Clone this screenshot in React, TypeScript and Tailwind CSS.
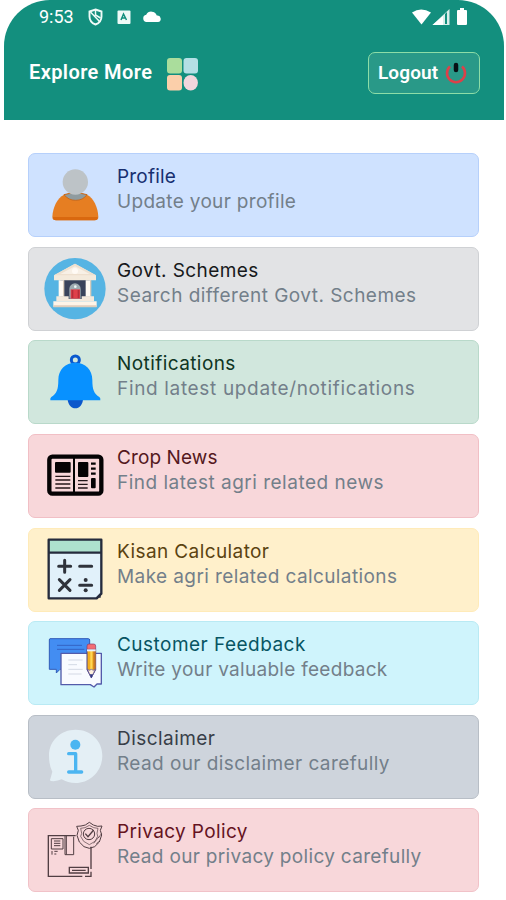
import type { ReactNode } from "react";

type Item = {
  title: string;
  text: string;
  box: string;
  titleClass: string;
  textClass: string;
  viewBox: string;
  icon: ReactNode;
};

const items: Item[] = [
  {
    title: "Profile",
    text: "Update your profile",
    box: "bg-[#cfe2ff] border-[#b6d0fb]",
    titleClass: "text-[#172f70] tracking-[0.2px]",
    textClass: "tracking-[0.32px]",
    viewBox: "28 28 264 246",
    icon: (
      <>
        <path d="M98 217C99 188 113 160 133 150Q167 137 202 150C222 160 235 188 236 217Q236 227 225 227H109Q98 227 98 217Z" fill="#e67e22" />
        <path d="M100 217h134q1 10-9 10H109q-10 0-9-10Z" fill="#d9680f" />
        <path d="M133 150q34-10 69 0-12 17-34 17t-35-17Z" fill="#8f9b9f" stroke="#c96a1c" strokeWidth="3" />
        <circle cx="167" cy="112" r="38" fill="#bdc3c7" />
      </>
    ),
  },
  {
    title: "Govt. Schemes",
    text: "Search different Govt. Schemes",
    box: "bg-[#e2e3e5] border-[#cfd1d4]",
    titleClass: "text-[#17191b] tracking-[0.42px]",
    textClass: "tracking-[0.47px]",
    viewBox: "28 24 264 246",
    icon: (
      <>
        <circle cx="166" cy="146" r="92" fill="#56b4e3" />
        <rect x="122" y="112" width="88" height="66" fill="#39435b" />
        <path d="M103 106 166 71l63 35v15H103Z" fill="#f4eadc" />
        <path d="M103 106 166 71l63 35Z" fill="#eee0cf" />
        <path d="M122 102 166 79l44 23Z" fill="#f8f0e6" />
        <circle cx="166" cy="93" r="9" fill="#fffaf5" />
        <path d="M117 121h16v49h-16ZM198 121h16v49h-16Z" fill="#fffaf3" />
        <path d="M130 121h4v49h-4ZM211 121h4v49h-4Z" fill="#d9cbbb" />
        <path d="M149 176v-29a17 17 0 0 1 34 0v29Z" fill="#9eabb0" />
        <path d="M153 148h28v28h-28Z" fill="#df404a" />
        <path d="M156 150h5v24h-5ZM174 150h5v24h-5Z" fill="#b62e3a" />
        <circle cx="167" cy="140" r="4" fill="#eef5f5" />
        <path d="M110 169h37v8h39v-8h37v15H110Z" fill="#f4e9dc" />
        <path d="M101 184h130v16H101Z" fill="#fff4e8" />
        <path d="M101 196h130v6H101Z" fill="#e0cdbb" />
      </>
    ),
  },
  {
    title: "Notifications",
    text: "Find latest update/notifications",
    box: "bg-[#d1e7dd] border-[#b9d9ca]",
    titleClass: "text-[#0e3523] tracking-[0.42px]",
    textClass: "tracking-[0.66px]",
    viewBox: "28 20 264 246",
    icon: (
      <>
        <circle cx="167" cy="77" r="12" fill="none" stroke="#0959cf" strokeWidth="9" />
        <path d="M144 196h46c-2 16-11 26-23 26s-21-10-23-26Z" fill="#0b57cb" />
        <path d="M116 137c0-31 21-52 51-52s51 21 51 52c0 29 5 41 21 51q4 3 3 10H92q-1-7 3-10c16-10 21-22 21-51Z" fill="#0891ff" />
      </>
    ),
  },
  {
    title: "Crop News",
    text: "Find latest agri related news",
    box: "bg-[#f8d7da] border-[#f1bfc5]",
    titleClass: "text-[#541820] tracking-[0.1px]",
    textClass: "tracking-[0.5px]",
    viewBox: "28 22 264 246",
    icon: (
      <>
        <rect x="89" y="87" width="156" height="111" rx="9" fill="#f8d7da" stroke="#050304" strokeWidth="13" />
        <path d="M163 88v110" stroke="#050304" strokeWidth="6" />
        <rect x="106" y="103" width="47" height="32" rx="3" fill="#050304" />
        <rect x="175" y="103" width="31" height="45" rx="3" fill="#050304" />
        <path d="M107 146h45M107 157h45M107 169h45M107 181h45M175 159h29M175 170h29M175 181h29" stroke="#241619" strokeWidth="4" />
        <path d="M214 108h14M214 123h14M214 138h14" stroke="#050304" strokeWidth="7" />
        <rect x="214" y="151" width="14" height="31" rx="3" fill="#050304" />
      </>
    ),
  },
  {
    title: "Kisan Calculator",
    text: "Make agri related calculations",
    box: "bg-[#fff0cb] border-[#ffebb9]",
    titleClass: "text-[#5b4311] tracking-[0.4px]",
    textClass: "tracking-[0.4px]",
    viewBox: "28 21 264 246",
    icon: (
      <>
        <path d="M87 53h158v162l-14 14H87Z" fill="#e1f1fa" />
        <path d="M87 53h158v38H87Z" fill="#aee2ce" />
        <path d="M87 53h158v162l-14 14H87ZM87 92h158" fill="none" stroke="#252b3d" strokeWidth="7" strokeLinejoin="round" />
        <path d="M228 227 243 212v15Z" fill="#252b3d" />
        <path d="M117 133h36M135 115v36M180 133h36M119 173l32 32M151 173l-32 32M180 190h36" stroke="#2f333b" strokeWidth="9" strokeLinecap="round" />
        <circle cx="198" cy="174" r="6" fill="#2f333b" />
        <circle cx="198" cy="205" r="6" fill="#2f333b" />
      </>
    ),
  },
  {
    title: "Customer Feedback",
    text: "Write your valuable feedback",
    box: "bg-[#cff4fc] border-[#b9eaf4]",
    titleClass: "text-[#075563] tracking-[0.47px]",
    textClass: "tracking-[0.29px]",
    viewBox: "28 22 264 246",
    icon: (
      <>
        <path d="M91 72h115q4 0 4 4v88h-89l-11 11v-11H89V76q0-4 2-4Z" fill="#438df2" stroke="#315bb6" strokeWidth="3" />
        <path d="M112 92h75M112 104h82" stroke="#3463c4" strokeWidth="3" />
        <path d="M124 116h121v92h-13l-9 9-11-7h-88Z" fill="#f9fbff" stroke="#535baa" strokeWidth="4" strokeLinejoin="round" />
        <path d="M146 136h43M146 150h26M146 164h43M146 178h40" stroke="#d4d9e5" strokeWidth="3" />
        <path d="M202 104h26v61l-13 24-13-24Z" fill="#f3ae20" stroke="#49418d" strokeWidth="3" />
        <path d="M212 105h6v61h-6Z" fill="#ffd657" />
        <path d="M221 105h7v60h-7Z" fill="#c87727" />
        <path d="M202 104V94q0-6 6-6h14q6 0 6 6v10Z" fill="#f26d73" stroke="#823c69" strokeWidth="2" />
        <path d="M202 104h26v6h-26Z" fill="#eef2ff" />
        <path d="m203 163 12 27 12-27-6 4-6-3-6 3Z" fill="#fff1dc" stroke="#554996" strokeWidth="2" />
        <path d="m210 179 5 12 5-12Z" fill="#303780" />
      </>
    ),
  },
  {
    title: "Disclaimer",
    text: "Read our disclaimer carefully",
    box: "bg-[#ced4dc] border-[#b8bec6]",
    titleClass: "text-[#383e48] tracking-[0.45px]",
    textClass: "tracking-[0.41px]",
    viewBox: "28 24 264 246",
    icon: (
      <>
        <path d="M88 143c0-45 35-78 80-78s80 33 80 78-35 82-80 82q-24 0-42-11-15 7-32 5-5-1-2-6l6-22q-10-18-10-48Z" fill="#e4eff5" />
        <circle cx="167" cy="110" r="15" fill="#4bb5f1" />
        <path d="M147 137h21v54M147 192h39" stroke="#4bb5f1" strokeWidth="10" strokeLinecap="round" strokeLinejoin="round" fill="none" />
      </>
    ),
  },
  {
    title: "Privacy Policy",
    text: "Read our privacy policy carefully",
    box: "bg-[#f8d7da] border-[#f1c2c8]",
    titleClass: "text-[#65131e] tracking-[0.36px]",
    textClass: "tracking-[0.32px]",
    viewBox: "28 23 264 246",
    icon: (
      <g fill="none" stroke="#513e43" strokeWidth="4">
        <path d="M168 103H86v122h102M196 225h18v-14M214 203v-67" />
        <path d="M95 112h35v31H95ZM103 119h19M103 126h19M103 133h19M97 149v11M104 150h10M104 158h6M136 104v56h26v-54M140 104v56" strokeWidth="3" />
        <path d="M149 198h57v17h-57ZM157 207h41" />
        <path d="m209 63 12 8 13 4 13-1-5 13 4 14-7 21-14 14-16 5-16-5-14-14-7-20 4-15-5-12 13-1 13-3Z" strokeWidth="3" />
        <path d="m209 72 13 7 13 2-3 15 2 9-8 15-17 10-17-10-9-15 3-9-3-15 13-2Z" strokeWidth="2" />
        <circle cx="208" cy="98" r="17" strokeWidth="3" />
        <path d="m197 97 8 9 17-20" />
        <path d="m239 105-17 21M246 96l-10 14M230 128l7-8" strokeWidth="2" />
      </g>
    ),
  },
];

function StatusBar() {
  return (
    <div className="flex h-[34px] items-center justify-between pr-[35px] pl-[35px] text-white">
      <div className="flex h-full items-center">
        <span className="w-[49px] text-[18px] leading-[34px] tracking-[0px]">9:53</span>
        <svg width="75" height="20" viewBox="0 0 75 20" fill="none">
          <path d="m7.500 2.500 6 2v5c0 4-2 6.500-6 8-4-1.500-6-4-6-8v-5Z" stroke="#eefaf7" strokeWidth="1.900" />
          <path d="m2.500 5 9.500 10M7.500 3v5l5 3" stroke="#eefaf7" strokeWidth="1.500" />
          <rect x="29.500" y="3.500" width="13" height="13.500" rx="1" fill="#eefaf7" />
          <path d="m33 13 2.500-6 3 6M34 11h4" stroke="#138f7e" strokeWidth="1.500" />
          <path d="M58.500 15a3.700 3.700 0 0 1-.3-7.300A5.800 5.800 0 0 1 68.800 8.500a3.300 3.300 0 0 1 1.200 6.500Z" fill="#fff" />
        </svg>
      </div>
      <svg width="58" height="20" viewBox="0 0 58 20">
        <path d="M1 5.500q9-6 19 0L10.500 17.500Z" fill="#fff" />
        <path d="M38.500 2v16H21.500Z" fill="#d8eeea" />
        <path d="M32 9v9H21.500Z" fill="#fff" />
        <path d="M34 7v10h2V5Z" fill="#138f7e" />
        <path d="M49 1h4v2h2q1 0 1 1v13q0 1-1 1h-8q-1 0-1-1V4q0-1 1-1h2Z" fill="#fff" />
      </svg>
    </div>
  );
}

function Header() {
  return (
    <header className="mr-[2.5px] ml-1 h-[120px] overflow-hidden rounded-t-[46px] bg-[#138f7e] font-['Roboto','Liberation_Sans',sans-serif]">
      <StatusBar />
      <div className="flex items-center justify-between pt-[18px] pr-[24px] pl-[25px]">
        <div className="flex items-center">
          <h1 className="w-[137.500px] pb-[2px] text-[20px] leading-[38px] font-semibold tracking-[0.4px] whitespace-nowrap text-white">Explore More</h1>
          <svg width="32" height="33" viewBox="0 0 32 33" className="mt-[3px]">
            <rect width="15" height="15.500" rx="3" fill="#aadd9c" />
            <rect x="16.500" width="14.500" height="15.500" rx="3" fill="#b4dfe5" />
            <rect y="17" width="15" height="15.500" rx="3" fill="#fbcfaa" />
            <ellipse cx="23.700" cy="24.700" rx="7.200" ry="7.800" fill="#f2d6dc" />
          </svg>
        </div>
        <button className="flex h-[42px] w-[112px] items-center rounded-[7px] border-[1.5px] border-[#8ddda7] bg-[#299988] pl-[9.500px] text-white">
          <span className="w-[67px] text-left text-[19px] font-semibold tracking-[0.1px]">Logout</span>
          <svg width="22" height="23" viewBox="0 0 22 23" fill="none">
            <path d="M5 4.500a9 9 0 1 0 12 0" stroke="#dc4149" strokeWidth="2.600" />
            <path d="M11 3v5" stroke="#071014" strokeWidth="4.500" strokeLinecap="round" />
          </svg>
        </button>
      </div>
    </header>
  );
}

export default function App() {
  return (
    <main className="h-[900px] w-[506px] overflow-hidden bg-white">
      <Header />
      <div className="mt-[33.3px] mr-[27px] ml-[28px] flex flex-col gap-[9.6px] font-['Inter','Roboto',sans-serif]">
        {items.map((item) => (
          <section key={item.title} className={`flex h-[84px] rounded-[7px] border ${item.box}`}>
            <svg width="88" height="82" viewBox={item.viewBox} className="shrink-0">{item.icon}</svg>
            <div className="flex flex-col items-start pt-[10px] leading-[25px] whitespace-nowrap">
              <h2 className={`text-[19px] ${item.titleClass}`}>{item.title}</h2>
              <p className={`text-[19px] text-[#737f8a] ${item.textClass}`}>{item.text}</p>
            </div>
          </section>
        ))}
      </div>
    </main>
  );
}
